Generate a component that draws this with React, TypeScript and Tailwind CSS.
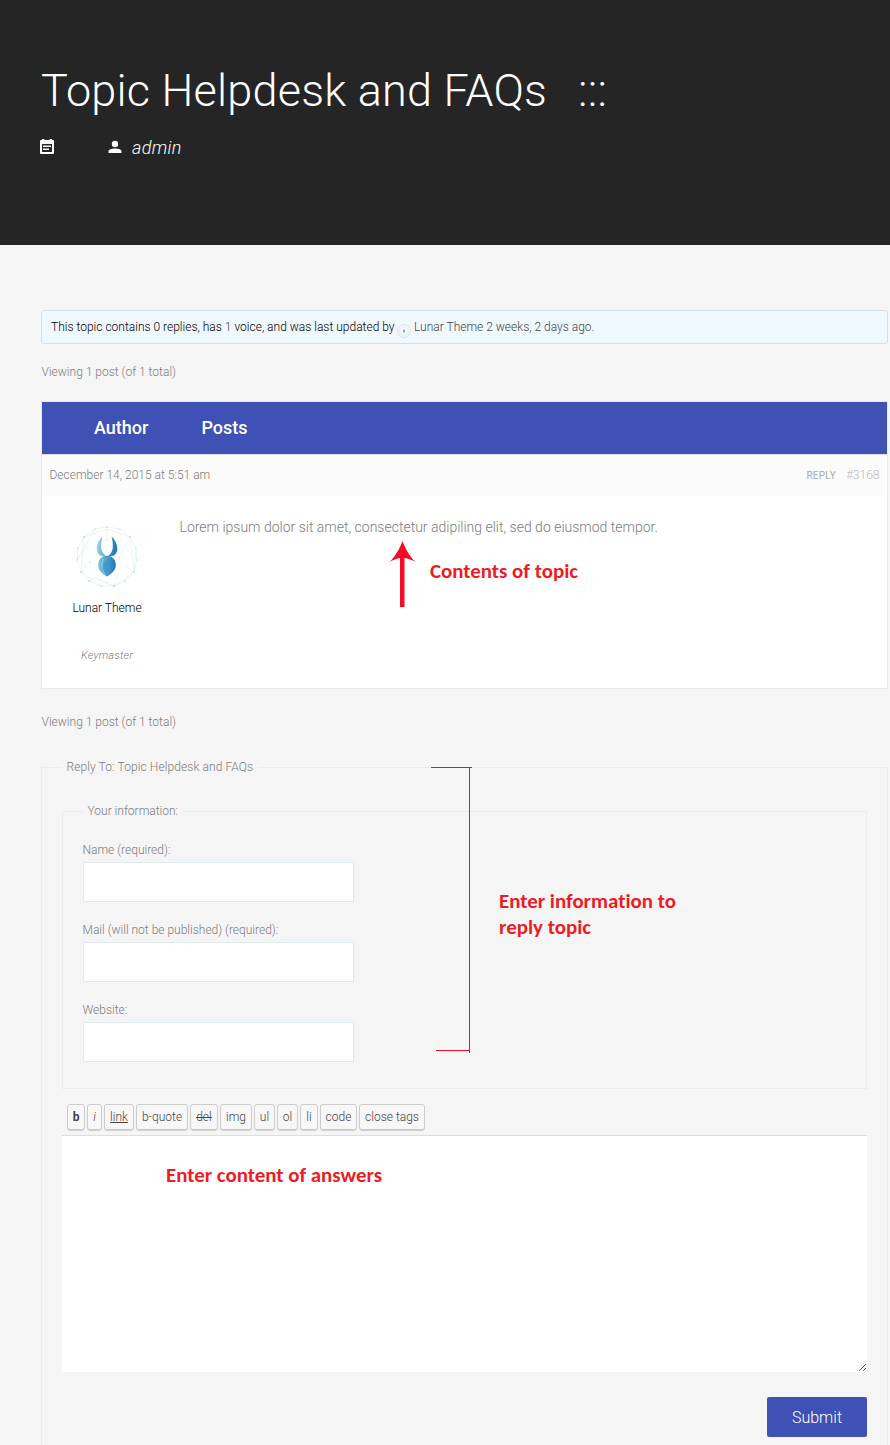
import type { ReactNode } from "react";

function Note({ className, children }: { className: string; children: ReactNode }) {
  return (
    <div className={`absolute whitespace-nowrap font-['Carlito','Lato',sans-serif] text-[20.9px] leading-[26px] font-bold text-[#ed1c24] [font-variant-ligatures:none] ${className}`}>
      {children}
    </div>
  );
}

function Avatar() {
  return (
    <svg className="block h-[80px] w-[80px]" viewBox="0 0 80 80" fill="none">
      <defs>
        <linearGradient id="left" x1="0" x2="1">
          <stop stopColor="#9fd3e4" />
          <stop offset="1" stopColor="#5aaed0" />
        </linearGradient>
        <linearGradient id="right" x1="0" x2="1">
          <stop stopColor="#2f97c6" />
          <stop offset="1" stopColor="#1f78ad" />
        </linearGradient>
        <linearGradient id="body" x1="0" x2="1">
          <stop stopColor="#7cc4e0" />
          <stop offset="0.5" stopColor="#4b9fd0" />
          <stop offset="1" stopColor="#1a78b2" />
        </linearGradient>
      </defs>
      <g stroke="#dceef1" strokeWidth="0.6">
        <path d="M40 9L53 11L63 19L69 30L70 42L67 54L58 63L47 68L34 68L22 63L14 54L10 42L11 30L17 19L28 11Z" />
        <path d="M40 9V22M17 19L40 11L63 19L52 40M63 19L67 54L51 44M10 42L28 11M14 54L17 19M14 54L23 44M14 54L34 68M28 60L47 68L67 54M47 68L51 56M22 63L28 60L47 68M69 30L67 54M11 30L10 42L23 25" />
      </g>
      <g fill="#a5c0c6">
        <circle cx="40" cy="9" r=".6" /><circle cx="53" cy="11" r=".6" /><circle cx="63" cy="19" r=".7" />
        <circle cx="69" cy="30" r=".6" /><circle cx="70" cy="42" r=".6" /><circle cx="67" cy="54" r=".7" />
        <circle cx="58" cy="63" r=".6" /><circle cx="47" cy="68" r=".8" /><circle cx="34" cy="68" r=".6" />
        <circle cx="22" cy="63" r=".7" /><circle cx="14" cy="54" r=".7" /><circle cx="10" cy="42" r=".6" />
        <circle cx="11" cy="30" r=".6" /><circle cx="17" cy="19" r=".7" /><circle cx="28" cy="11" r=".6" />
        <circle cx="40" cy="22" r=".6" /><circle cx="52" cy="40" r=".6" /><circle cx="23" cy="44" r=".6" />
      </g>
      <path d="M35.500 18.500C30 23 27 34 33 37.500L37 38.500L38.500 37.500C33 34 33.500 26 35.500 18.500Z" fill="url(#left)" />
      <path d="M44.500 18.500C50 23 53 34 47 37.500L43 38.500L41.500 37.500C47 34 46.500 26 44.500 18.500Z" fill="url(#right)" />
      <path d="M36 38.500C38 37.500 42 37.500 44 38.500C47 40 48.800 43 48.800 47C48.800 53 44 56 40 58.500C36 56 31.200 53 31.200 47C31.200 43 33 40 36 38.500Z" fill="url(#body)" />
      <path d="M40 41C34 46 34 53 40 58.300C46 53 46 46 40 41Z" fill="#3a93c9" opacity=".6" />
      <path d="M37 41C34 44 34 52 39 57" stroke="#a5d7ea" strokeWidth=".7" />
    </svg>
  );
}

function Field({ label }: { label: string }) {
  return (
    <label className="block h-[80px]">
      <span className="-ml-[0.5px] block h-[22px] text-[12px] leading-[20px]">{label}</span>
      <input className="block h-[40px] w-[271px] border border-[#dfeaf0] bg-white px-3 outline-none" />
    </label>
  );
}

const tags = [
  { label: "b", cls: "w-[18px] font-bold" },
  { label: "i", cls: "w-[15px] italic" },
  { label: "link", cls: "w-[30px] underline" },
  { label: "b-quote", cls: "w-[52px]" },
  { label: "del", cls: "w-[28px] line-through" },
  { label: "img", cls: "w-[32px]" },
  { label: "ul", cls: "w-[21px]" },
  { label: "ol", cls: "w-[21px]" },
  { label: "li", cls: "w-[18px]" },
  { label: "code", cls: "w-[37px]" },
  { label: "close tags", cls: "w-[66px]" },
];

export default function App() {
  return (
    <div className="relative h-[1445px] w-[890px] overflow-hidden bg-[#f5f5f5] font-['Roboto',sans-serif] text-[12px] font-light text-[#7c7c7c]">
      <header className="h-[245px] bg-[#252525] pt-[61px] pl-[41px] text-white">
        <h1 className="flex h-[60px] text-[45px] leading-[60px] font-light tracking-[0.22px] whitespace-nowrap">
          <span>Topic Helpdesk and FAQs</span>
          <span className="ml-[31px]">:::</span>
        </h1>
        <div className="mt-[12px] flex h-[28px] items-center text-[18px] leading-[28px] italic">
          <svg className="-mt-[2px] -ml-px h-[15px] w-[15px]" viewBox="0 0 15 15">
            <path fill="currentColor" fillRule="evenodd" d="M1 1H2V0H4.500V1H9.500V0H12V1H13Q14 1 14 2V14Q14 15 13 15H1Q0 15 0 14V2Q0 1 1 1ZM2 5V13H12V5ZM3 6.500H11V8H3ZM3 9.500H9V11H3Z" />
          </svg>
          <svg className="ml-[53px] h-[14px] w-[14px]" viewBox="0 0 14 14" fill="currentColor">
            <circle cx="7" cy="4" r="3.200" />
            <path d="M.5 13V11Q1 8.500 7 8.500T13.500 11V13Z" />
          </svg>
          <span className="mt-px ml-[10px] tracking-[0.3px]">admin</span>
        </div>
      </header>

      <main className="pt-[65px] pr-[2px] pl-[41px]">
        <div className="flex h-[34px] items-center rounded-[3px] border border-[#cee1ef] bg-[#f0f8ff] pl-[9px] whitespace-pre text-black">
          This topic contains 0 replies, has <span className="text-[#444]">1</span> voice, and was last updated by
          <svg className="mt-[8px] mr-[3.500px] ml-[2px] h-[14px] w-[14px]" viewBox="0 0 14 14" fill="none">
            <circle cx="7" cy="7" r="6.300" stroke="#d7dadd" fill="#fafcfd" />
            <circle cx="7" cy="7" r="4.200" stroke="#dce3e6" strokeWidth=".8" />
            <path d="M6 5L7 6L8 5V8L7 9L6 8Z" fill="#75b2d2" />
          </svg>
          <span className="text-[#444]">Lunar Theme 2 weeks, 2 days ago.</span>
        </div>
        <p className="mt-[18px] h-[20px] pl-[0.5px] leading-[20px]">Viewing 1 post (of 1 total)</p>

        <section className="mt-[19px] h-[288px] border border-[#ebebeb] bg-white">
          <div className="flex h-[52px] items-center bg-[#3f51b5] pb-[2px] text-[18px] font-medium text-white">
            <span className="ml-[52px] w-[107.500px]">Author</span>
            <span>Posts</span>
          </div>
          <div className="flex h-[42px] items-center border-t border-[#ddd] bg-[#fbfbfb] px-[7.500px] pb-[2px]">
            <span>December 14, 2015 at 5:51 am</span>
            <span className="mt-px ml-auto text-[10px] font-normal tracking-[0.2px] text-[#aaa]">REPLY</span>
            <span className="ml-[10px] text-[#bbb]">#3168</span>
          </div>
          <div className="flex">
            <div className="flex w-[130px] flex-col items-center pt-[22px]">
              <Avatar />
              <span className="leading-[20px] text-black">Lunar Theme</span>
              <span className="mt-[28px] text-[11px] leading-[20px] tracking-[0.2px] italic">Keymaster</span>
            </div>
            <p className="ml-[7.500px] pt-[21px] text-[14px] leading-[20px]">
              Lorem ipsum dolor sit amet, consectetur adipiling elit, sed do eiusmod tempor.
            </p>
          </div>
        </section>
        <p className="mt-[23px] h-[20px] pl-[0.5px] leading-[20px]">Viewing 1 post (of 1 total)</p>

        <fieldset className="mt-[25px] h-[800px] border border-[#ececec] px-[20px]">
          <legend className="h-[20px] px-[4.500px] leading-[20px] tracking-[0.09px]">Reply To: Topic Helpdesk and FAQs</legend>
          <fieldset className="mt-[24px] h-[288px] border border-[#ececec] px-[20px]">
            <legend className="h-[20px] px-[4.500px] leading-[20px]">Your information:</legend>
            <div className="pt-[19px]">
              <Field label="Name (required):" />
              <Field label="Mail (will not be published) (required):" />
              <Field label="Website:" />
            </div>
          </fieldset>
          <div className="mt-[15px] flex h-[31px] gap-[2px] pl-[5px] text-[#444]">
            {tags.map((t) => (
              <button
                key={t.label}
                className={`h-[27px] shrink-0 rounded-[3px] border border-[#ccc] bg-[#f7f7f7] pb-[2px] text-center leading-[22px] whitespace-nowrap shadow-[inset_0_-1px_0_#ccc] ${t.cls}`}
              >
                {t.label}
              </button>
            ))}
          </div>
          <textarea className="block h-[237px] w-full resize border-t border-[#ddd] bg-white outline-none" />
          <div className="mt-[25px] flex justify-end">
            <button className="h-[40px] w-[100px] rounded-[2px] bg-[#3f51b5] pt-px text-[16px] font-light text-white">Submit</button>
          </div>
        </fieldset>
      </main>

      <svg className="absolute top-[541px] left-[389px] h-[66px] w-[27px]" viewBox="0 0 27 66">
        <path fill="#f20d27" d="M13.500 0C16 7 21 16 26.500 21C23 19 19 17.500 15.500 17V66H11V17C8 17.500 4 19 .5 21C6 16 11 7 13.500 0Z" />
      </svg>
      <Note className="top-[558px] left-[430px]">Contents of topic</Note>
      <svg className="absolute top-[767px] left-[431px] h-[286px] w-[41px]" viewBox="0 0 41 286" fill="#f20d27">
        <path d="M0 0H41V1H39V286H38V284H5V283H38V1H0Z" />
      </svg>
      <Note className="top-[888px] left-[499px]">
        Enter information to
        <br />
        reply topic
      </Note>
      <Note className="top-[1162px] left-[166px]">Enter content of answers</Note>
    </div>
  );
}
